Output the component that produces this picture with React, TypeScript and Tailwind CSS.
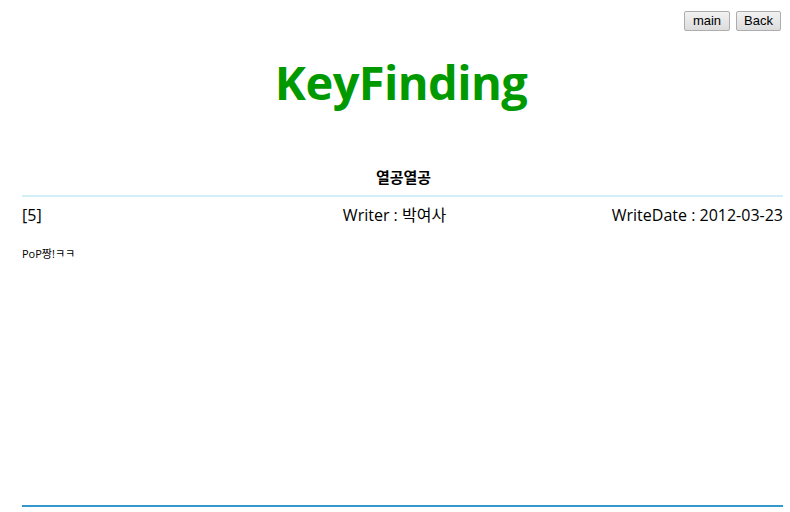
export default function App() {
  return (
    <div className="h-[512px] w-[790px] bg-white font-['Open_Sans','Noto_Sans_CJK_KR',sans-serif] text-black">
      <div className="flex justify-end gap-[6px] pr-[9px] pt-[11px]">
        <button className="h-[20px] rounded-[2px] border border-[#adadad] bg-gradient-to-b from-[#f2f2f2] to-[#dcdcdc] px-[8px] font-['Liberation_Sans',sans-serif] text-[13px] leading-[18px]">
          main
        </button>
        <button className="h-[20px] rounded-[2px] border border-[#adadad] bg-gradient-to-b from-[#f2f2f2] to-[#dcdcdc] px-[7px] font-['Liberation_Sans',sans-serif] text-[13px] leading-[18px]">
          Back
        </button>
      </div>
      <h1 className="mt-[20px] pl-[12px] text-center text-[47px] font-bold leading-[62px] tracking-[-0.6px] text-[#009900]">
        KeyFinding
      </h1>
      <div className="mx-[22px] mr-[7px]">
        <div className="mt-[54px] pl-[2px] text-center text-[15px] font-bold leading-[20px]">열공열공</div>
        <div className="mt-[8px] h-[2px] bg-[#d4eef8]" />
        <div className="mt-[7px] flex items-center justify-between text-[16px] leading-[22px]">
          <span className="w-[200px]">[5]</span>
          <span className="pr-[16px]">Writer : 박여사</span>
          <span className="w-[200px] text-right">WriteDate : 2012-03-23</span>
        </div>
        <div className="mt-[21px] h-[258px] text-[11px] leading-[14px]">PoP짱!ㅋㅋ</div>
        <div className="h-[2px] bg-[#3399cc]" />
      </div>
    </div>
  )
}
